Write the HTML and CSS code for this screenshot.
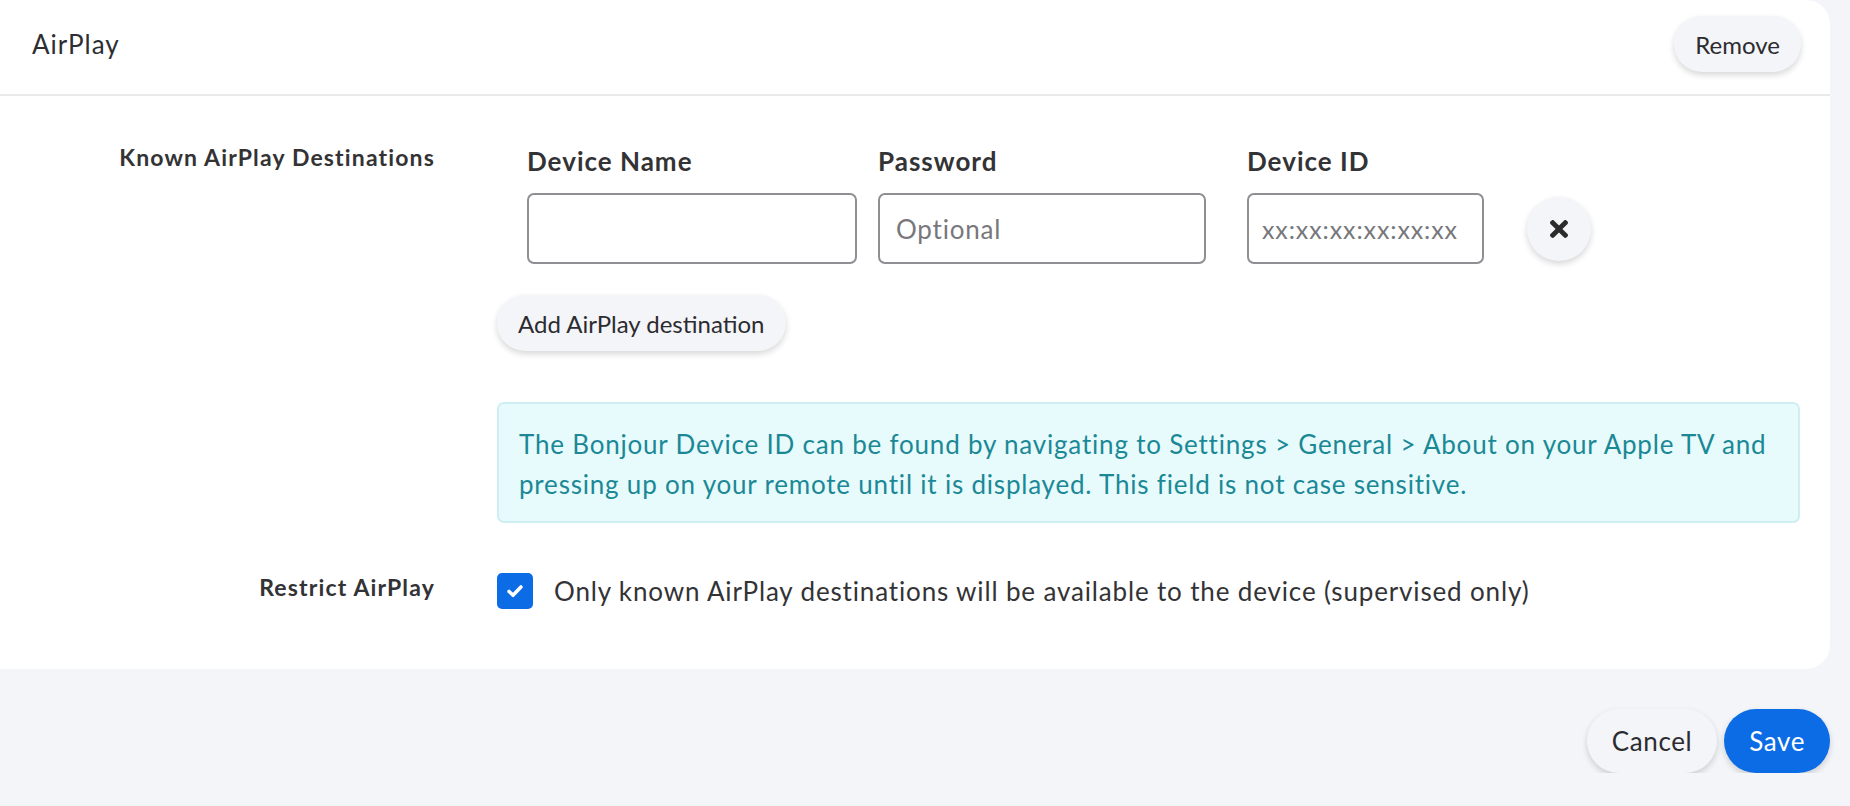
FILE: index.html
```html
<!DOCTYPE html>
<html lang="en">
<head>
<meta charset="utf-8">
<title>AirPlay</title>
<link rel="stylesheet" href="styles.css">
</head>
<body>
<div class="page">
  <section class="card">
    <header class="card-header">
      <h1 class="title">AirPlay</h1>
      <button class="pill-btn">Remove</button>
    </header>
    <div class="card-body">
      <div class="field-label label-dest">Known AirPlay Destinations</div>
      <div class="field-content">
        <div class="dest-table">
          <div class="col-head">Device Name</div>
          <div class="col-head">Password</div>
          <div class="col-head col-id">Device ID</div>
          <div></div>
          <input class="text-input" type="text">
          <input class="text-input" type="text" placeholder="Optional">
          <div class="col-id"><input class="text-input input-id" type="text" placeholder="xx:xx:xx:xx:xx:xx"></div>
          <div class="col-x">
            <button class="icon-btn" aria-label="Remove row">
              <svg class="x-icon" viewBox="0 80 352 352" width="18" height="18"><path fill="#2b2b2b" d="M242.72 256l100.07-100.07c12.28-12.28 12.28-32.19 0-44.48l-22.24-22.24c-12.28-12.28-32.19-12.28-44.48 0L176 189.28 75.93 89.21c-12.28-12.28-32.19-12.28-44.48 0L9.21 111.450c-12.28 12.28-12.28 32.19 0 44.48L109.28 256 9.21 356.07c-12.28 12.28-12.28 32.19 0 44.48l22.24 22.24c12.28 12.28 32.2 12.28 44.48 0L176 322.72l100.07 100.07c12.28 12.28 32.2 12.28 44.48 0l22.24-22.24c12.28-12.28 12.28-32.19 0-44.48L242.72 256z"/></svg>
            </button>
          </div>
        </div>
        <button class="pill-btn add-btn">Add AirPlay destination</button>
        <div class="info-box">The Bonjour Device ID can be found by navigating to Settings &gt; General &gt; About on your Apple TV and pressing up on your remote until it is displayed. This field is not case sensitive.</div>
      </div>
      <div class="field-label label-restrict">Restrict AirPlay</div>
      <div class="field-content">
        <label class="check-row">
          <span class="checkbox">
            <svg viewBox="0 0 20 20" width="22" height="22"><path d="M4.6 10.4 L8.2 13.9 L15.4 6.3" fill="none" stroke="#fff" stroke-width="3.2" stroke-linecap="round" stroke-linejoin="round"/></svg>
          </span>
          <span class="check-text">Only known AirPlay destinations will be available to the device (supervised only)</span>
        </label>
      </div>
    </div>
  </section>
  <footer class="footer">
    <button class="pill-btn footer-btn">Cancel</button>
    <button class="pill-btn footer-btn primary">Save</button>
  </footer>
</div>
</body>
</html>
```

FILE: styles.css
```css
* { box-sizing: border-box; }

html, body {
  margin: 0;
  padding: 0;
  background: #f4f5f9;
  font-family: "Lato", "Liberation Sans", Arial, sans-serif;
  color: #2f2f33;
}

.page {
  padding-right: 20px;
}

.card {
  background: #ffffff;
  border-radius: 0 24px 24px 0;
}

.card-header {
  display: flex;
  align-items: center;
  justify-content: space-between;
  padding: 16px 29px 22px 32px;
  border-bottom: 2px solid #e9e9ec;
}

.title {
  margin: 0;
  font-size: 26px;
  font-weight: 400;
  letter-spacing: 1px;
  color: #2e2e32;
  line-height: 30px;
}

.pill-btn {
  font-family: inherit;
  font-size: 24px;
  color: #2c2c30;
  background: #f4f5f9;
  border: none;
  border-radius: 999px;
  height: 56px;
  padding: 0 21px;
  box-shadow: 0 3px 6px rgba(0, 0, 0, 0.16);
  cursor: pointer;
}

.card-body {
  display: grid;
  grid-template-columns: 435px 1fr;
  column-gap: 62px;
  row-gap: 50px;
  padding: 50px 30px 60px 0;
}

.field-label {
  text-align: right;
  font-size: 23px;
  font-weight: 700;
  letter-spacing: 1.15px;
  color: #333336;
}

.label-dest {
  line-height: 22px;
}

.label-restrict {
  line-height: 28px;
}

.field-content {
  display: flex;
  flex-direction: column;
  align-items: flex-start;
}

.dest-table {
  display: grid;
  grid-template-columns: 330px 328px 258px 85px;
  grid-template-rows: 30px 71px;
  column-gap: 21px;
  row-gap: 17px;
  margin-left: 30px;
}

.col-head {
  font-size: 26px;
  font-weight: 700;
  line-height: 30px;
  color: #333336;
  letter-spacing: 1px;
}

.col-id {
  padding-left: 20px;
}

.text-input {
  width: 100%;
  height: 71px;
  border: 2px solid #8e8e93;
  border-radius: 7px;
  padding: 0 16px;
  font-family: inherit;
  font-size: 26px;
  letter-spacing: 0.8px;
  color: #333;
  background: #fff;
  outline: none;
}

.text-input::placeholder {
  color: #77777c;
}

.input-id {
  width: 237px;
  padding: 0 13px;
  font-size: 25px;
  letter-spacing: 0.9px;
}

.col-x {
  display: flex;
  align-items: center;
  padding-left: 21px;
}

.icon-btn {
  width: 64px;
  height: 64px;
  border-radius: 50%;
  border: none;
  background: #f4f5f9;
  box-shadow: 0 3px 6px rgba(0, 0, 0, 0.16);
  display: flex;
  align-items: center;
  justify-content: center;
  padding: 0;
  cursor: pointer;
}

.x-icon {
  display: block;
}

.add-btn {
  margin-top: 31px;
}

.info-box {
  margin-top: 51px;
  align-self: stretch;
  background: #e7fbfd;
  border: 2px solid #cdeff4;
  border-radius: 7px;
  padding: 20px 20px 17px 20px;
  font-size: 26px;
  letter-spacing: 0.8px;
  line-height: 40px;
  color: #1b8896;
}

.check-row {
  display: flex;
  align-items: center;
  gap: 21px;
}

.checkbox {
  width: 36px;
  height: 36px;
  border-radius: 5px;
  background: #0b6ce6;
  display: flex;
  align-items: center;
  justify-content: center;
  flex: none;
}

.check-text {
  font-size: 26px;
  letter-spacing: 0.85px;
  color: #333336;
  line-height: 30px;
}

.footer {
  display: flex;
  justify-content: flex-end;
  gap: 7px;
  padding-top: 40px;
}

.footer-btn {
  height: 64px;
  font-size: 26px;
  letter-spacing: 0.6px;
  padding: 0 25px;
}

.primary {
  background: #0b6ce6;
  color: #ffffff;
}
```
